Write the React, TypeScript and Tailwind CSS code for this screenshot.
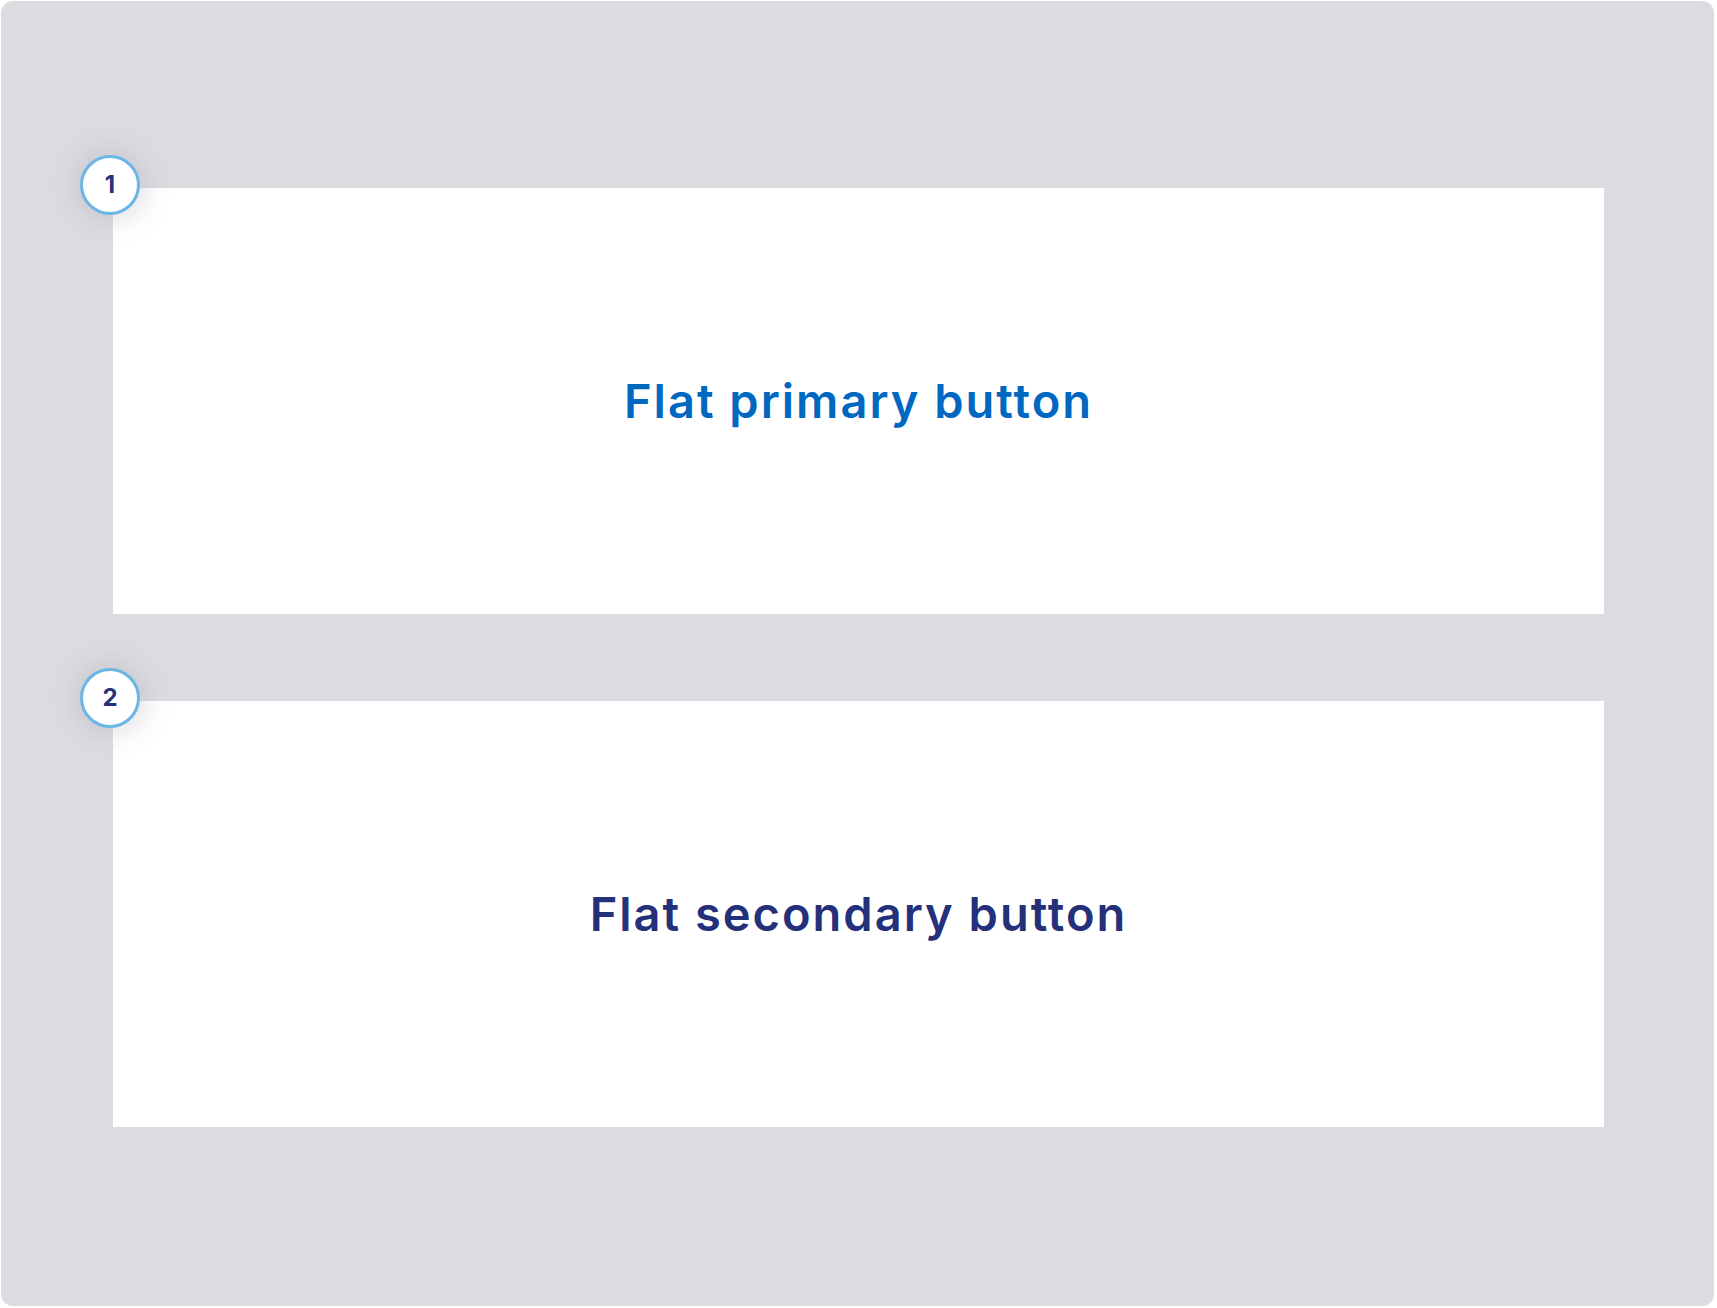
const buttons = [
  { n: "1", label: "Flat primary button", color: "text-[#0068c1]" },
  { n: "2", label: "Flat secondary button", color: "text-[#25307b]" },
]

function Badge({ n }: { n: string }) {
  return (
    <div className="absolute -left-[33px] -top-[33px] flex h-[60px] w-[60px] items-center justify-center rounded-full border-[3px] border-[#6cb6e6] bg-white shadow-[0_0_24px_8px_rgba(150,150,170,0.25)]">
      <span className="text-[24px] font-bold text-[#24307a]">{n}</span>
    </div>
  )
}

export default function App() {
  return (
    <div className="min-h-screen bg-white p-px" style={{ fontFamily: "Inter, 'Noto Sans', sans-serif" }}>
      <div className="flex h-[1305px] w-[1713px] flex-col gap-[87px] rounded-[12px] bg-[#dcdce0] pl-[112px] pr-[110px] pt-[187px]">
        {buttons.map(b => (
          <div key={b.n} className="relative flex h-[426px] items-center justify-center bg-white">
            <Badge n={b.n} />
            <span className={`text-[47px] font-semibold tracking-[2px] ${b.color}`}>{b.label}</span>
          </div>
        ))}
      </div>
    </div>
  )
}
